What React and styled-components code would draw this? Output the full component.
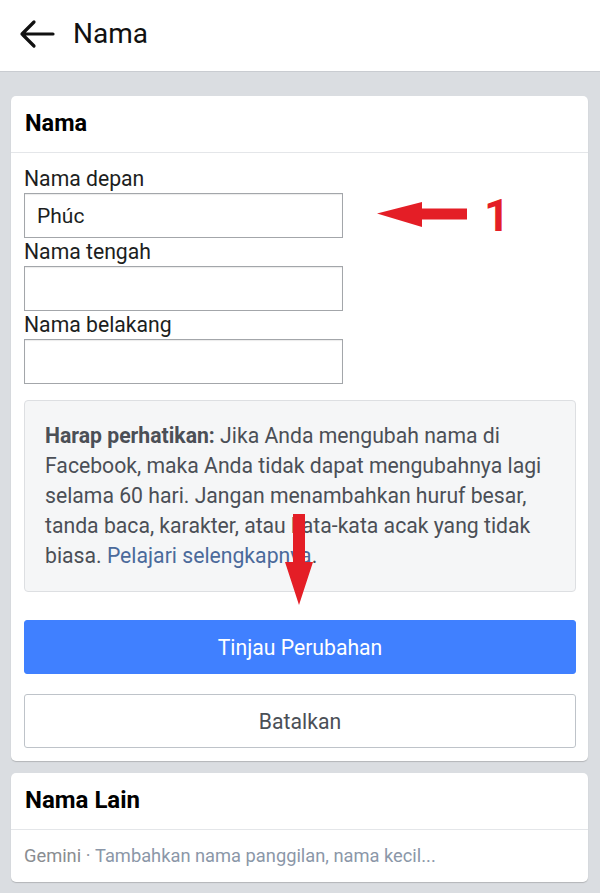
import React from 'react';
import styled, { createGlobalStyle } from 'styled-components';

const GlobalStyle = createGlobalStyle`
  html, body {
    margin: 0;
    padding: 0;
    background: #dadde1;
    font-family: Roboto, 'Noto Sans', 'Liberation Sans', sans-serif;
  }
  * { box-sizing: border-box; }
`;

const Page = styled.div`
  position: relative;
  width: 600px;
  min-height: 893px;
  background: #dadde1;
`;

const TopBar = styled.header`
  display: flex;
  align-items: center;
  height: 72px;
  padding: 0 0 4px 19px;
  background: #fff;
  border-bottom: 1px solid #c9ccd1;

  h1 {
    margin: 0 0 0 18px;
    font-size: 28px;
    font-weight: 400;
    color: #111;
  }
`;

const Main = styled.main`
  display: flex;
  flex-direction: column;
  gap: 12px;
  padding: 24px 12px 0 11px;
`;

const Card = styled.section`
  background: #fff;
  border-radius: 5px;
  box-shadow: 0 1px 1px rgba(0, 0, 0, 0.18);
  overflow: hidden;
`;

const CardHeader = styled.div`
  display: flex;
  align-items: center;
  height: 57px;
  padding: 0 14px 2px;
  border-bottom: 1px solid #e4e6e9;
  font-size: ${p => p.$size || 23.5}px;
  font-weight: 700;
  color: #000;
`;

const CardBody = styled.div`
  display: flex;
  flex-direction: column;
  padding: 12px 12px 13px 13px;
`;

const Label = styled.label`
  display: block;
  height: 28px;
  line-height: 28px;
  font-size: 21.2px;
  color: #1c1e21;
`;

const Input = styled.div`
  display: flex;
  align-items: center;
  width: 319px;
  height: 45px;
  padding: 0 12px;
  border: 1px solid #a3a6aa;
  box-shadow: inset 0 1px 1px rgba(0, 0, 0, 0.08);
  font-size: 21px;
  color: #1c1e21;
`;

const Notice = styled.div`
  margin-top: 16px;
  padding: 20px 20px;
  background: #f5f6f7;
  border: 1px solid #dddfe2;
  border-radius: 4px;
  font-size: 21.2px;
  line-height: 30px;
  color: #4b4f56;

  b { font-weight: 700; }
  a { color: #4b6a9b; text-decoration: none; }
`;

const Button = styled.div`
  display: flex;
  align-items: center;
  justify-content: center;
  height: 54px;
  margin-top: ${p => p.$gap}px;
  border-radius: 3px;
  font-size: 21.2px;
  background: ${p => (p.$primary ? '#4080ff' : '#fff')};
  color: ${p => (p.$primary ? '#fff' : '#4b4f56')};
  border: 1px solid ${p => (p.$primary ? '#4080ff' : '#bec3c9')};
`;

const AltRow = styled.div`
  display: flex;
  align-items: center;
  height: 52px;
  padding: 0 13px 2px;
  font-size: 18.3px;
  color: #8d949e;

  span { color: #8a8d91; }
  em { font-style: normal; color: #8b97a8; }
`;

const Mark = styled.svg`
  position: absolute;
  left: ${p => p.$x}px;
  top: ${p => p.$y}px;
`;

const MarkNumber = styled.div`
  position: absolute;
  left: 484px;
  top: 190px;
  font-size: 45px;
  font-weight: 700;
  line-height: 52px;
  color: #e41e26;
`;

function BackIcon() {
  return (
    <svg width="36" height="30" viewBox="0 0 36 30">
      <path d="M34 15H3M15 3L3 15l12 12" fill="none" stroke="#111" strokeWidth="3.2" strokeLinecap="round" strokeLinejoin="round" />
    </svg>
  );
}

export default function App() {
  return (
    <Page>
      <GlobalStyle />
      <TopBar>
        <BackIcon />
        <h1>Nama</h1>
      </TopBar>
      <Main>
        <Card>
          <CardHeader>Nama</CardHeader>
          <CardBody>
            <Label>Nama depan</Label>
            <Input>Phúc</Input>
            <Label>Nama tengah</Label>
            <Input />
            <Label>Nama belakang</Label>
            <Input />
            <Notice>
              <b>Harap perhatikan:</b> Jika Anda mengubah nama di Facebook, maka Anda tidak dapat mengubahnya lagi selama 60 hari. Jangan menambahkan huruf besar, tanda baca, karakter, atau kata-kata acak yang tidak biasa. <a href="#">Pelajari selengkapnya</a>.
            </Notice>
            <Button $primary $gap={28}>Tinjau Perubahan</Button>
            <Button $gap={20}>Batalkan</Button>
          </CardBody>
        </Card>
        <Card>
          <CardHeader $size={24}>Nama Lain</CardHeader>
          <AltRow>
            <span>Gemini</span>&nbsp;·&nbsp;<em>Tambahkan nama panggilan, nama kecil...</em>
          </AltRow>
        </Card>
      </Main>

      <Mark $x={376} $y={201} width="92" height="28" viewBox="0 0 92 28">
        <path d="M1 12.5L46 1v6.5h45v11H46V26z" fill="#e41e26" />
      </Mark>
      <MarkNumber>1</MarkNumber>
      <Mark $x={284} $y={514} width="30" height="92" viewBox="0 0 30 92">
        <path d="M9 0h12v48h8L15 91 1 48h8z" fill="#e41e26" />
      </Mark>
    </Page>
  );
}
